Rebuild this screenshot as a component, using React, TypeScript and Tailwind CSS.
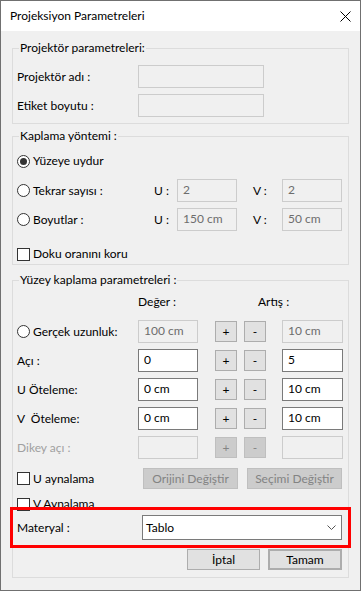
import type { ReactNode } from 'react';

// Windows-style dialog: "Projeksiyon Parametreleri"

function Group({ title, className, children }: { title: string; className: string; children: ReactNode }) {
  return (
    <div className={`relative mx-[11px] border border-[#dcdcdc] px-[4px] ${className}`}>
      <span className="absolute -top-[9px] left-[6px] bg-[#f0f0f0] px-[1px] leading-[16px]">{title}</span>
      {children}
    </div>
  );
}

function Field({ value = '', enabled = false, className = '' }: { value?: string; enabled?: boolean; className?: string }) {
  return (
    <div
      className={`h-[23px] border pl-[5px] pt-[2px] leading-[16px] ${
        enabled ? 'border-[#7a7a7a] bg-white text-black' : 'border-[#cccccc] bg-[#f0f0f0] text-[#6d6d6d]'
      } ${className}`}
    >
      {value}
    </div>
  );
}

function Radio({ checked = false }: { checked?: boolean }) {
  return (
    <span className="flex h-[13px] w-[13px] shrink-0 items-center justify-center rounded-full border border-[#333333] bg-white">
      {checked && <span className="h-[7px] w-[7px] rounded-full bg-[#333333]" />}
    </span>
  );
}

function Check() {
  return <span className="h-[13px] w-[13px] shrink-0 border border-[#333333] bg-white" />;
}

function Btn({ label, enabled = true, className = '' }: { label: string; enabled?: boolean; className?: string }) {
  return (
    <div
      className={`flex h-[21px] items-center justify-center border ${
        enabled ? 'border-[#adadad] bg-[#e1e1e1] text-black' : 'border-[#bfbfbf] bg-[#cccccc] text-[#838383]'
      } ${className}`}
    >
      {label}
    </div>
  );
}

function ParamRow({ label, value, step, radio, enabled = true }: { label: string; value: string; step: string; radio?: boolean; enabled?: boolean }) {
  return (
    <div className="flex h-[23px] items-center">
      <div className={`flex w-[121px] items-center gap-[3px] ${enabled ? 'text-black' : 'text-[#a0a0a0]'}`}>
        {radio && <Radio />}
        <span className="whitespace-pre">{label}</span>
      </div>
      <Field value={value} enabled={enabled && !radio} className="w-[60px]" />
      <Btn label="+" enabled={enabled} className="ml-[17px] w-[22px]" />
      <Btn label="-" enabled={enabled} className="ml-[7px] w-[22px]" />
      <Field value={step} enabled={enabled && !radio} className="ml-[16px] w-[61px]" />
    </div>
  );
}

export default function App() {
  return (
    <div className="min-h-screen bg-white">
      <div className="relative flex h-[591px] w-[361px] flex-col border border-[#707070] bg-[#f0f0f0] font-['Lato',sans-serif] text-[12px] text-black">
        {/* Title bar */}
        <div className="flex h-[30px] items-center justify-between bg-white pl-[9px] pr-[9px]">
          <span className="leading-[16px]">Projeksiyon Parametreleri</span>
          <svg width="11" height="11" viewBox="0 0 11 11">
            <path d="M0.5 0.5 L10.5 10.5 M10.5 0.5 L0.5 10.5" stroke="#000" strokeWidth="1" />
          </svg>
        </div>

        {/* Projektör parametreleri */}
        <Group title="Projektör parametreleri:" className="mt-[17px] h-[76px] pt-[16px]">
          <div className="flex h-[23px] items-center">
            <span className="w-[121px]">Projektör adı :</span>
            <Field className="w-[126px]" />
          </div>
          <div className="mt-[6px] flex h-[23px] items-center">
            <span className="w-[121px]">Etiket boyutu :</span>
            <Field className="w-[126px]" />
          </div>
        </Group>

        {/* Kaplama yöntemi */}
        <Group title="Kaplama yöntemi :" className="mt-[12px] h-[129px] pt-[14px]">
          <div className="flex h-[20px] items-center gap-[3px]">
            <Radio checked />
            <span>Yüzeye uydur</span>
          </div>
          {[
            { label: 'Tekrar sayısı :', u: '2', v: '2', mt: 'mt-[8px]' },
            { label: 'Boyutlar :', u: '150 cm', v: '50 cm', mt: 'mt-[6px]' },
          ].map((r) => (
            <div key={r.label} className={`flex h-[23px] items-center ${r.mt}`}>
              <div className="flex w-[137px] items-center gap-[3px]">
                <Radio />
                <span>{r.label}</span>
              </div>
              <span className="w-[23px]">U :</span>
              <Field value={r.u} className="w-[60px]" />
              <span className="ml-[16px] w-[29px]">V :</span>
              <Field value={r.v} className="w-[60px]" />
            </div>
          ))}
          <div className="mt-[16px] flex h-[14px] items-center gap-[3px]">
            <Check />
            <span>Doku oranını koru</span>
          </div>
        </Group>

        {/* Yüzey kaplama parametreleri */}
        <Group title="Yüzey kaplama parametreleri :" className="mt-[15px] h-[298px] pt-[13px]">
          <div className="flex h-[16px] items-center leading-[16px]">
            <span className="ml-[121px] w-[120px]">Değer :</span>
            <span>Artış :</span>
          </div>
          <div className="mt-[10px] flex flex-col gap-[6px]">
            <ParamRow label="Gerçek uzunluk:" value="100 cm" step="10 cm" radio />
            <ParamRow label="Açı :" value="0" step="5" />
            <ParamRow label="U Öteleme:" value="0 cm" step="10 cm" />
            <ParamRow label="V  Öteleme:" value="0 cm" step="10 cm" />
            <ParamRow label="Dikey açı :" value="" step="" enabled={false} />
          </div>
          <div className="mt-[9px] flex h-[21px] items-center">
            <div className="flex w-[126px] items-center gap-[3px]">
              <Check />
              <span>U aynalama</span>
            </div>
            <Btn label="Orijini Değiştir" enabled={false} className="w-[95px]" />
            <Btn label="Seçimi Değiştir" enabled={false} className="ml-[9px] w-[95px]" />
          </div>
          <div className="mt-[8px] flex h-[14px] items-center gap-[3px]">
            <Check />
            <span>V Aynalama</span>
          </div>
          <div className="mt-[4px] flex h-[25px] items-center">
            <span className="w-[125px]">Materyal :</span>
            <div className="flex h-[25px] w-[200px] items-center justify-between border border-[#7a7a7a] bg-white pl-[3px] pr-[5px]">
              <span>Tablo</span>
              <svg width="9" height="6" viewBox="0 0 9 6">
                <path d="M0.5 0.5 L4.5 4.5 L8.5 0.5" fill="none" stroke="#555" strokeWidth="1" />
              </svg>
            </div>
          </div>
          <div className="mt-[9px] flex h-[21px] items-center">
            <Btn label="İptal" className="ml-[170px] w-[73px]" />
            <Btn label="Tamam" className="ml-[8px] w-[74px] border-2 border-[#0078d7]" />
          </div>
        </Group>

        {/* highlight annotation */}
        <div className="absolute left-[9px] top-[506px] h-[41px] w-[341px] border-[3px] border-[#ff0000]" />
      </div>
    </div>
  );
}
